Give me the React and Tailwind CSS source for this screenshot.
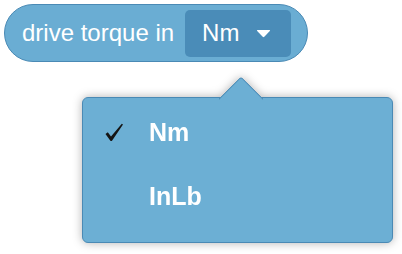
import React from "react";

function Caret() {
  return (
    <svg width="15" height="9" viewBox="0 0 15 9" className="block">
      <path d="M1.5 1 L13.5 1 Q14.6 1 13.8 2 L8.3 7.8 Q7.5 8.6 6.7 7.8 L1.2 2 Q0.4 1 1.5 1 Z" fill="white" />
    </svg>
  );
}

function Check() {
  return (
    <svg width="19" height="19" viewBox="0 0 19 19" className="block">
      <path d="M0.5 11 L2.8 9.3 L6 13.6 L16.8 0.8 L18 1.6 L7.2 17.6 Q6.2 18.6 5.2 17.6 Z" fill="#151515" />
    </svg>
  );
}

export default function App() {
  const options = [
    { label: "Nm", selected: true },
    { label: "InLb", selected: false },
  ];

  return (
    <div className="relative w-[402px] h-[254px] bg-white font-['Liberation_Sans',Arial,sans-serif]">
      {/* pill with inline dropdown */}
      <div className="p-[4px]">
        <div className="inline-flex items-center h-[58px] pl-[17px] pr-[16px] rounded-full bg-[#6aadd3] border border-[#4a8ab5]">
          <span className="text-[24px] text-white leading-none pb-[1px]">drive torque in</span>
          <button className="ml-[11px] flex items-center h-[47px] w-[106px] pl-[17px] rounded-[5px] bg-[#4a8cb8]">
            <span className="text-[24px] text-white leading-none">Nm</span>
            <span className="ml-[17px] mt-[1px]">
              <Caret />
            </span>
          </button>
        </div>
      </div>

      {/* menu */}
      <div className="absolute left-[82px] top-[97px] w-[311px] h-[146px] drop-shadow-[0_0_5px_rgba(0,0,0,0.3)]">
        <div className="relative w-full h-full rounded-[6px] bg-[#6cafd4] border-[1.5px] border-[#4a8ab5]">
          <div className="absolute left-[142px] top-[-15px] w-[32px] h-[32px] rotate-45 bg-[#6cafd4] border-t-[1.5px] border-l-[1.5px] border-[#4a8ab5] rounded-tl-[3px]" />
          <div className="relative pt-[2px]">
            {options.map((o) => (
              <div key={o.label} className="flex items-center h-[64px]">
                <span className="w-[66px] pl-[22px]">
                  {o.selected ? <Check /> : null}
                </span>
                <span className="text-[25px] font-bold text-white leading-none">{o.label}</span>
              </div>
            ))}
          </div>
        </div>
      </div>
    </div>
  );
}
